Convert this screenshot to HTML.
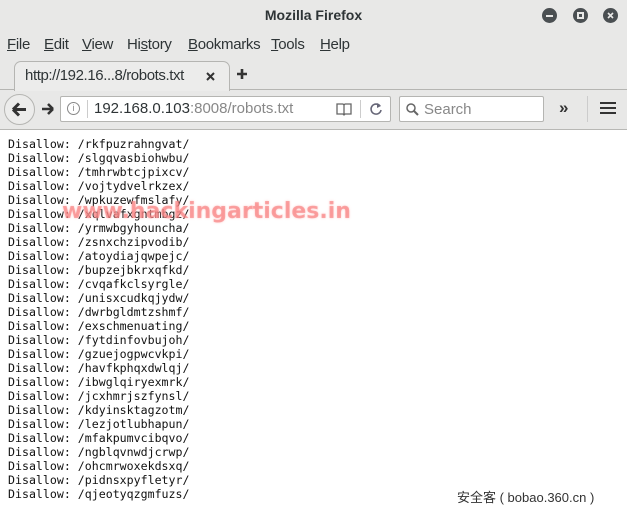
<!DOCTYPE html>
<html><head><meta charset="utf-8"><style>
*{margin:0;padding:0;box-sizing:border-box}
body{width:627px;height:514px;overflow:hidden;background:#fff;font-family:"Liberation Sans",sans-serif;position:relative}
.chrome{position:absolute;left:0;top:0;width:627px;height:130px;background:#e8e8e7;border-bottom:1px solid #b8b8b5}
.title{position:absolute;top:7px;left:0;width:627px;text-align:center;font-size:14px;font-weight:bold;color:#2e3436}
.wb{position:absolute;top:8px;width:15px;height:15px;border-radius:50%;background:#4a4f52}
.menu span{position:absolute;top:36px;font-size:15px;color:#2e3436;white-space:nowrap;letter-spacing:-0.3px}
.tab{position:absolute;left:14px;top:61px;width:216px;height:30px;border:1px solid #b5b5b2;border-bottom:none;border-radius:7px 7px 0 0;background:#ececeb;font-size:15px;letter-spacing:-0.4px;color:#2e3436;padding:5px 0 0 10px;white-space:nowrap}
.url{position:absolute;left:60px;top:96px;width:331px;height:26px;background:#fff;border:1px solid #b5b5b2;border-radius:2px}
.search{position:absolute;left:399px;top:96px;width:145px;height:26px;background:#fff;border:1px solid #b5b5b2;border-radius:2px;font-size:15px;color:#888;padding:4px 0 0 24px}
pre{position:absolute;left:8px;top:137px;font-family:"DejaVu Sans Mono","Liberation Mono",monospace;font-size:11.6px;line-height:14px;color:#111}
.wm{position:absolute;left:62px;top:199px;font-family:"DejaVu Sans",sans-serif;font-weight:bold;font-size:22px;color:rgba(245,110,110,0.55);text-shadow:0 0 2px rgba(255,180,180,0.7)}
.foot{position:absolute;left:457px;top:487px;font-size:13px;color:#333;font-family:"Liberation Sans","Noto Sans CJK SC",sans-serif}
</style></head><body>
<div class="chrome">
<div class="title">Mozilla Firefox</div>
<div class="wb" style="left:542px"><div style="position:absolute;left:4px;top:7px;width:7px;height:2px;background:#e8e8e7"></div></div>
<div class="wb" style="left:573px"><div style="position:absolute;left:4px;top:4px;width:7px;height:7px;border:2px solid #e8e8e7"></div></div>
<div class="wb" style="left:603px"><svg width="15" height="15" style="position:absolute;left:0;top:0"><path d="M5 5L10 10M10 5L5 10" stroke="#e8e8e7" stroke-width="1.6"/></svg></div>
<div class="menu"><span style="left:7px"><u>F</u>ile</span><span style="left:44px"><u>E</u>dit</span><span style="left:82px"><u>V</u>iew</span><span style="left:127px">Hi<u>s</u>tory</span><span style="left:188px"><u>B</u>ookmarks</span><span style="left:271px"><u>T</u>ools</span><span style="left:320px"><u>H</u>elp</span></div>
<div style="position:absolute;left:0;top:89px;width:627px;height:1px;background:#b5b5b2"></div>
<div class="tab">http://192.16...8/robots.txt<svg width="9" height="9" style="position:absolute;left:191px;top:10px"><path d="M1 1L8 8M8 1L1 8" stroke="#333" stroke-width="2"/></svg></div>
<svg width="10" height="10" style="position:absolute;left:237px;top:69px"><path d="M5 0V10M0 5H10" stroke="#333" stroke-width="2.6"/></svg>
<div class="url">
<span style="position:absolute;left:6px;top:5px;width:13px;height:13px;border:1px solid #888;border-radius:50%;font-size:9px;color:#888;text-align:center;line-height:11px">i</span>
<span style="position:absolute;left:26px;top:3px;width:1px;height:18px;background:#ccc"></span>
<span style="position:absolute;left:33px;top:3px;font-size:15px;color:#2e3436">192.168.0.103<span style="color:#888">:8008/robots.txt</span></span>
<svg width="16" height="14" style="position:absolute;left:275px;top:5px"><path d="M1 2H7L8 3L9 2H15V12H9L8 13L7 12H1Z M8 3V12" fill="none" stroke="#666" stroke-width="1.3"/></svg>
<span style="position:absolute;left:299px;top:3px;width:1px;height:18px;background:#ccc"></span>
<svg width="14" height="14" style="position:absolute;left:308px;top:5px"><path d="M11 4A5 5 0 1 0 12 8" fill="none" stroke="#667" stroke-width="1.6"/><path d="M8 1L12 4L8 6Z" fill="#667"/></svg>
</div>
<div style="position:absolute;left:4px;top:94px;width:31px;height:31px;border-radius:50%;border:1px solid #b5b5b2;background:#ececeb"><svg width="29" height="29"><path d="M8 14.5H21M8 14.5L14 8.5M8 14.5L14 20.5" fill="none" stroke="#333" stroke-width="3"/></svg></div>
<svg width="16" height="16" style="position:absolute;left:40px;top:101px"><path d="M2 8H13M13 8L8 3M13 8L8 13" fill="none" stroke="#333" stroke-width="2.6"/></svg>
<div class="search"><svg style="position:absolute;left:6px;top:6px" width="13" height="13"><circle cx="5" cy="5" r="4" fill="none" stroke="#666" stroke-width="1.5"/><line x1="8" y1="8" x2="12" y2="12" stroke="#666" stroke-width="2"/></svg>Search</div>
<div style="position:absolute;left:559px;top:98px;font-size:17px;color:#333;font-weight:bold">»</div>
<div style="position:absolute;left:587px;top:96px;width:1px;height:26px;background:#ccc"></div>
<div style="position:absolute;left:600px;top:102px;width:16px;height:2px;background:#333;box-shadow:0 5px 0 #333,0 10px 0 #333"></div>
</div>
<pre>Disallow: /rkfpuzrahngvat/
Disallow: /slgqvasbiohwbu/
Disallow: /tmhrwbtcjpixcv/
Disallow: /vojtydvelrkzex/
Disallow: /wpkuzewfmslafy/
Disallow: /xqlvafxgntmbgz/
Disallow: /yrmwbgyhouncha/
Disallow: /zsnxchzipvodib/
Disallow: /atoydiajqwpejc/
Disallow: /bupzejbkrxqfkd/
Disallow: /cvqafkclsyrgle/
Disallow: /unisxcudkqjydw/
Disallow: /dwrbgldmtzshmf/
Disallow: /exschmenuating/
Disallow: /fytdinfovbujoh/
Disallow: /gzuejogpwcvkpi/
Disallow: /havfkphqxdwlqj/
Disallow: /ibwglqiryexmrk/
Disallow: /jcxhmrjszfynsl/
Disallow: /kdyinsktagzotm/
Disallow: /lezjotlubhapun/
Disallow: /mfakpumvcibqvo/
Disallow: /ngblqvnwdjcrwp/
Disallow: /ohcmrwoxekdsxq/
Disallow: /pidnsxpyfletyr/
Disallow: /qjeotyqzgmfuzs/</pre>
<div class="wm">www.hackingarticles.in</div>
<div class="foot">安全客 ( bobao.360.cn )</div>
</body></html>
